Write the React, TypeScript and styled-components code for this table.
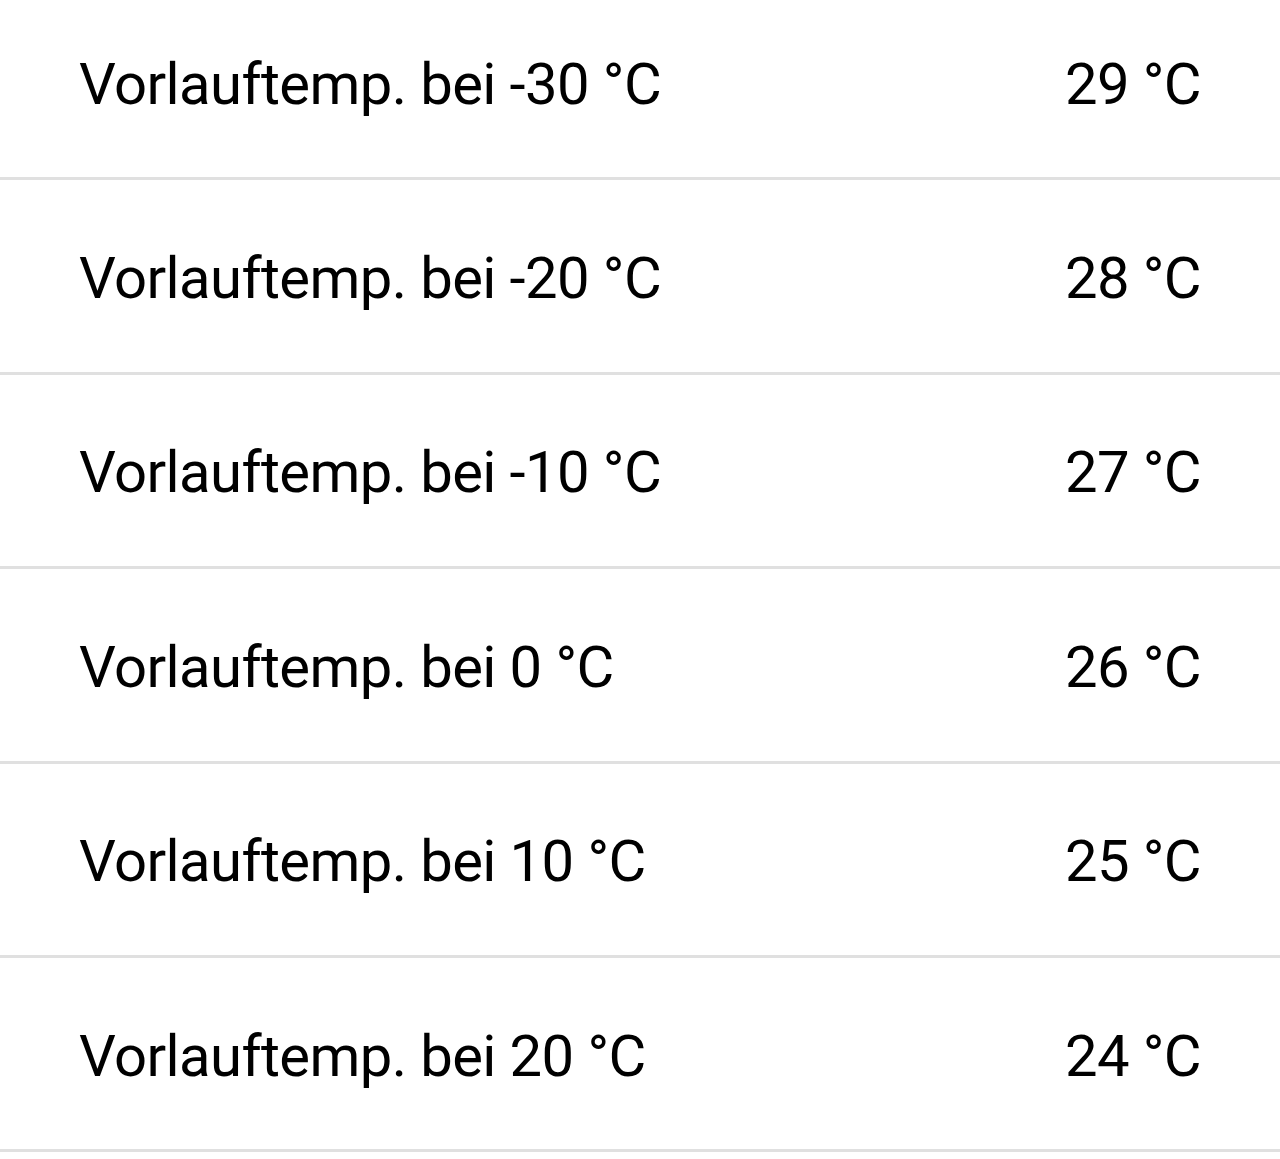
import React, {FC} from 'react';
import {createGlobalStyle, styled} from "styled-components";

const GlobalStyle = createGlobalStyle`
  html, body {
    margin: 0;
    padding: 0;
    background: #ffffff;
  }
`

const SettingsList = styled.ul`
  list-style: none;
  margin: -14px 0 0 0;
  padding: 0;
  width: 100%;
  font-family: Roboto, "Noto Sans", sans-serif;
`

const SettingsRow = styled.li`
  box-sizing: border-box;
  height: 194.4px;
  padding: 4px 79px 0 79px;
  border-bottom: solid 3px #e0e0e0;

  display: flex;
  align-items: center;
  justify-content: space-between;
`

const RowText = styled.span`
  font-size: 58px;
  letter-spacing: -0.6px;
  color: #000000;
  font-weight: normal;
`

interface Setting {
  outside: number;
  flow: number;
}

const settings: Setting[] = [
  {outside: -30, flow: 29},
  {outside: -20, flow: 28},
  {outside: -10, flow: 27},
  {outside: 0, flow: 26},
  {outside: 10, flow: 25},
  {outside: 20, flow: 24},
];

const App: FC = () => {
  return (
    <>
      <GlobalStyle/>
      <SettingsList>
        {settings.map(s => (
          <SettingsRow key={s.outside}>
            <RowText>Vorlauftemp. bei {s.outside} °C</RowText>
            <RowText>{s.flow} °C</RowText>
          </SettingsRow>
        ))}
      </SettingsList>
    </>
  );
};

export default App;
